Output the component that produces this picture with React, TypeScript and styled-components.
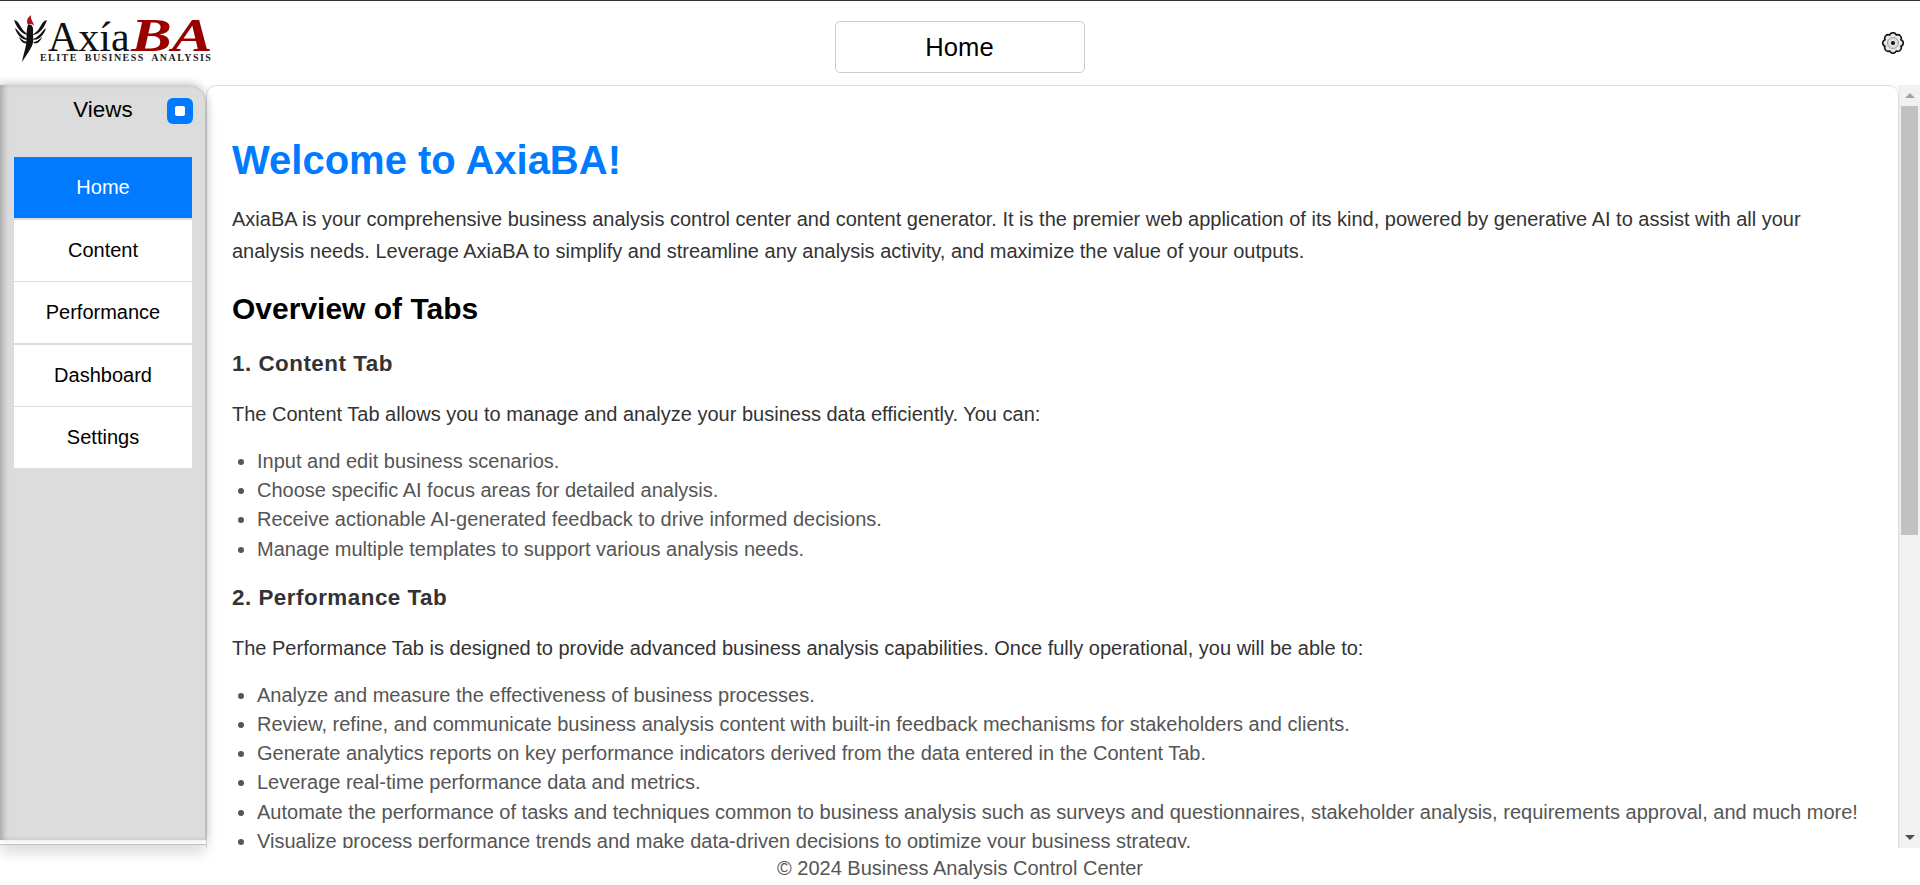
import React from "react";
import styled, { createGlobalStyle } from "styled-components";

const GlobalStyle = createGlobalStyle`
  * { box-sizing: border-box; }
  html, body { margin: 0; padding: 0; height: 100%; background: #fff; }
  body { font-family: "Liberation Sans", Arial, sans-serif; overflow: hidden; }
`;

const Page = styled.div`
  height: 100vh;
  display: flex;
  flex-direction: column;
  border-top: 1px solid #333;
`;

const Header = styled.header`
  height: 84px;
  flex: none;
  display: grid;
  grid-template-columns: 1fr 250px 1fr;
  align-items: center;
  padding: 0 15px 0 14px;
`;

const Logo = styled.div`
  display: flex;
  align-items: flex-start;
  height: 48px;
  margin-top: -8px;
`;

const LogoText = styled.div`
  display: flex;
  flex-direction: column;
  font-family: "Liberation Serif", "Times New Roman", serif;
`;

const LogoWords = styled.div`
  display: flex;
  align-items: baseline;
  height: 37px;
  line-height: 41px;
`;

const LogoAxia = styled.span`
  font-size: 42px;
  color: #111;
`;

const LogoBA = styled.span`
  font-size: 47px;
  font-weight: 700;
  font-style: italic;
  color: #990000;
  transform: scaleX(1.3);
  transform-origin: left;
  margin-left: 1px;
`;

const LogoTag = styled.span`
  margin: 1px 0 0 -8px;
  font-size: 10px;
  line-height: 9px;
  font-weight: 700;
  letter-spacing: 1.45px;
  word-spacing: 3px;
  color: #222;
  white-space: nowrap;
`;

const TitleBox = styled.div`
  height: 52px;
  margin-top: 8px;
  border: 1px solid #ccc;
  border-radius: 5px;
  display: flex;
  align-items: center;
  justify-content: center;
  font-size: 25.6px;
  color: #000;
`;

const SettingsButton = styled.div`
  justify-self: end;
  width: 22px;
  height: 22px;
  margin-right: 1px;
`;

const Body = styled.div`
  flex: none;
  height: 763px;
  display: flex;
`;

const SidebarFrame = styled.div`
  width: 206px;
  height: 760px;
  flex: none;
  border-bottom: 1px solid #c4c4c4;
  padding-bottom: 4px;
  box-shadow: 0 8px 14px rgba(0, 0, 0, 0.14);
  border-top-right-radius: 18px;
  position: relative;
  z-index: 1;
`;

const Sidebar = styled.aside`
  height: 100%;
  background: #dcdcdc;
  border-top-right-radius: 18px;
  border-right: 1px solid #bdbdbd;
  padding: 0 13px 0 14px;
  box-shadow: inset 5px 0 6px -2px rgba(0, 0, 0, 0.25), 0 -2px 8px rgba(0, 0, 0, 0.2);
`;

const SidebarHead = styled.div`
  height: 72px;
  display: flex;
  align-items: flex-start;
  justify-content: center;
  position: relative;
  padding-top: 11px;
  font-size: 22.4px;
  line-height: 28px;
  color: #000;
`;

const Toggle = styled.span`
  position: absolute;
  top: 13px;
  right: -1px;
  width: 26px;
  height: 26px;
  border-radius: 6px;
  background: #007bff;
  display: flex;
  align-items: center;
  justify-content: center;

  &::after {
    content: "";
    width: 10px;
    height: 10px;
    border-radius: 2px;
    background: #fff;
  }
`;

const NavList = styled.nav`
  display: flex;
  flex-direction: column;
  gap: 1.5px;
`;

const NavItem = styled.div<{ $active?: boolean }>`
  height: 61px;
  display: flex;
  align-items: center;
  justify-content: center;
  font-size: 20px;
  background: ${(p) => (p.$active ? "#007bff" : "#fff")};
  color: ${(p) => (p.$active ? "#fff" : "#000")};
`;

const Main = styled.main`
  flex: 1;
  min-width: 0;
  overflow: hidden;
`;

const Article = styled.article`
  min-height: 1284px;
  padding: 51px 25px 0 25px;
  border: 1px solid #ddd;
  border-radius: 10px 10px 0 0;
  box-shadow: 0 0 6px rgba(0, 0, 0, 0.05);
  font-size: 20px;
  color: #333;
`;

const Title = styled.h1`
  margin: 0 0 20px;
  font-size: 40px;
  line-height: 46px;
  font-weight: 700;
  color: #007bff;
`;

const Para = styled.p`
  margin: 0 0 17px;
  line-height: 32px;
`;

const SectionTitle = styled.h2`
  margin: 25px 0 22px;
  font-size: 30px;
  line-height: 34px;
  font-weight: 700;
  color: #000;
`;

const TabTitle = styled.h3`
  margin: 18px 0 18px;
  font-size: 22.4px;
  line-height: 32px;
  font-weight: 700;
  letter-spacing: 0.5px;
  color: #333;
`;

const Bullets = styled.ul`
  margin: 0 0 18px;
  padding: 0 0 0 25px;
  color: #555;
`;

const Bullet = styled.li`
  line-height: 29.2px;
`;

const ScrollBar = styled.div`
  flex: none;
  width: 21px;
  display: flex;
  flex-direction: column;
  background: #f1f1f1;
  border-left: 1px solid #e8e8e8;
`;

const ScrollArrow = styled.div<{ $down?: boolean }>`
  flex: none;
  height: 21px;
  display: flex;
  align-items: center;
  justify-content: center;

  &::after {
    content: "";
    width: 0;
    height: 0;
    border-left: 5px solid transparent;
    border-right: 5px solid transparent;
    ${(p) => (p.$down ? "border-top: 5px solid #505050;" : "border-bottom: 5px solid #a3a3a3;")}
  }
`;

const ScrollTrack = styled.div`
  flex: 1;
  padding: 0 2px 0 1px;
`;

const ScrollThumb = styled.div`
  height: 429px;
  background: #c1c1c1;
`;

const Footer = styled.footer`
  flex: 1;
  min-height: 0;
  display: flex;
  align-items: center;
  justify-content: center;
  padding-top: 3px;
  font-size: 20px;
  color: #555;
`;

const Phoenix = () => (
  <svg width="34" height="48" viewBox="0 0 34 48" style={{ flex: "none" }}>
    <g fill="#111">
      <path d="M0 5 C4 6 5 9 7 12 C9 16 12 18 15 20 C9 20 3 14 0 5 Z" />
      <path d="M1 13 C4 15 6 19 9 21 C11 23 13 24 15 24 C10 27 3 21 1 13 Z" />
      <path d="M5 22 C8 25 11 27 15 27 C12 30 7 28 5 22 Z" />
      <path d="M33 5 C29 6 28 9 26 12 C24 16 21 18 18 20 C24 20 30 14 33 5 Z" />
      <path d="M32 13 C29 15 27 19 24 21 C22 23 20 24 18 24 C23 27 30 21 32 13 Z" />
      <path d="M28 22 C25 25 22 27 19 27 C21 30 26 28 28 22 Z" />
      <path d="M14 10 C17 8 20 12 19 17 C19 22 20 26 18 31 C16 35 12 41 8 47 C9 41 11 35 12 30 C13 24 12 15 14 10 Z" />
    </g>
    <path d="M17 0 C13 3 12 6 14 10 C16 8 19 9 20 11 C20 7 16 5 17 0 Z" fill="#b5121b" />
  </svg>
);

const Gear = () => (
  <svg width="22" height="22" viewBox="0 0 22 22">
    <path
      d="M14.33 2.96 A3.6 3.6 0 0 1 19.04 7.67 A3.6 3.6 0 0 1 19.04 14.33 A3.6 3.6 0 0 1 14.33 19.04 A3.6 3.6 0 0 1 7.67 19.04 A3.6 3.6 0 0 1 2.96 14.33 A3.6 3.6 0 0 1 2.96 7.67 A3.6 3.6 0 0 1 7.67 2.96 A3.6 3.6 0 0 1 14.33 2.96 Z"
      fill="#e8e8e8"
      stroke="#111"
      strokeWidth="1.6"
    />
    <circle cx="11" cy="11" r="5.5" fill="#dedede" stroke="#9a9a9a" strokeWidth="1" />
    <circle cx="11" cy="11" r="2" fill="#111" />
  </svg>
);

const navItems = ["Home", "Content", "Performance", "Dashboard", "Settings"];

const contentPoints = [
  "Input and edit business scenarios.",
  "Choose specific AI focus areas for detailed analysis.",
  "Receive actionable AI-generated feedback to drive informed decisions.",
  "Manage multiple templates to support various analysis needs.",
];

const performancePoints = [
  "Analyze and measure the effectiveness of business processes.",
  "Review, refine, and communicate business analysis content with built-in feedback mechanisms for stakeholders and clients.",
  "Generate analytics reports on key performance indicators derived from the data entered in the Content Tab.",
  "Leverage real-time performance data and metrics.",
  "Automate the performance of tasks and techniques common to business analysis such as surveys and questionnaires, stakeholder analysis, requirements approval, and much more!",
  "Visualize process performance trends and make data-driven decisions to optimize your business strategy.",
];

const App = () => {
  return (
    <Page>
      <GlobalStyle />
      <Header>
        <Logo>
          <Phoenix />
          <LogoText>
            <LogoWords>
              <LogoAxia>Axía</LogoAxia>
              <LogoBA>BA</LogoBA>
            </LogoWords>
            <LogoTag>ELITE BUSINESS ANALYSIS</LogoTag>
          </LogoText>
        </Logo>
        <TitleBox>Home</TitleBox>
        <SettingsButton>
          <Gear />
        </SettingsButton>
      </Header>
      <Body>
        <SidebarFrame>
          <Sidebar>
            <SidebarHead>
              Views
              <Toggle />
            </SidebarHead>
            <NavList>
              {navItems.map((item) => (
                <NavItem key={item} $active={item === "Home"}>
                  {item}
                </NavItem>
              ))}
            </NavList>
          </Sidebar>
        </SidebarFrame>
        <Main>
          <Article>
            <Title>Welcome to AxiaBA!</Title>
            <Para>
              AxiaBA is your comprehensive business analysis control center and content generator. It is the premier web
              application of its kind, powered by generative AI to assist with all your analysis needs. Leverage AxiaBA to
              simplify and streamline any analysis activity, and maximize the value of your outputs.
            </Para>
            <SectionTitle>Overview of Tabs</SectionTitle>
            <TabTitle>1. Content Tab</TabTitle>
            <Para>The Content Tab allows you to manage and analyze your business data efficiently. You can:</Para>
            <Bullets>
              {contentPoints.map((point) => (
                <Bullet key={point}>{point}</Bullet>
              ))}
            </Bullets>
            <TabTitle>2. Performance Tab</TabTitle>
            <Para>
              The Performance Tab is designed to provide advanced business analysis capabilities. Once fully operational,
              you will be able to:
            </Para>
            <Bullets>
              {performancePoints.map((point) => (
                <Bullet key={point}>{point}</Bullet>
              ))}
            </Bullets>
          </Article>
        </Main>
        <ScrollBar>
          <ScrollArrow />
          <ScrollTrack>
            <ScrollThumb />
          </ScrollTrack>
          <ScrollArrow $down />
        </ScrollBar>
      </Body>
      <Footer>© 2024 Business Analysis Control Center</Footer>
    </Page>
  );
};

export default App;
